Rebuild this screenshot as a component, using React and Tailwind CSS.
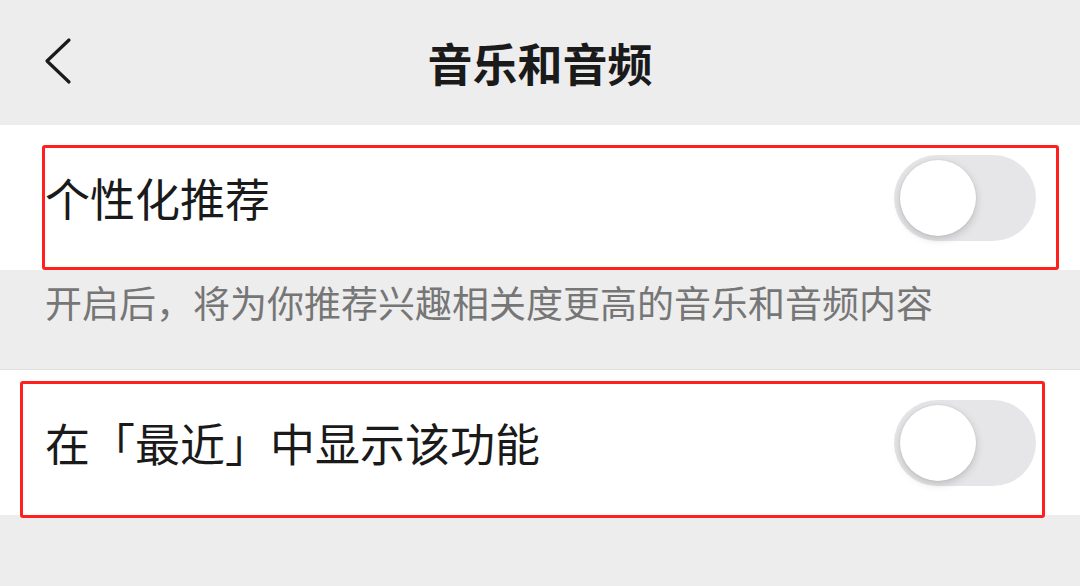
const cjk = { fontFamily: '"Noto Sans CJK SC", "Noto Sans", sans-serif' };

function Toggle() {
  return (
    <div className="relative w-[142px] h-[86px] rounded-full bg-[#e6e6e9]">
      <div className="absolute left-[6px] top-[5px] w-[76px] h-[76px] rounded-full bg-white shadow-[0_3px_8px_rgba(0,0,0,0.18),0_0_0_1px_rgba(0,0,0,0.03)]" />
    </div>
  );
}

function SettingRow({ label, mark }) {
  return (
    <div className="relative bg-white h-[145px] flex items-center justify-between pl-[45px] pr-[44px]">
      <span className="text-[45px] text-[#1a1a1a] leading-none">{label}</span>
      <Toggle />
      <div className={`absolute border-[3px] border-[#ff1f1f] rounded-[3px] ${mark}`} />
    </div>
  );
}

export default function App() {
  return (
    <div className="w-[1080px] h-[586px] bg-[#ededed] overflow-hidden" style={cjk}>
      <div className="relative h-[125px] flex items-center justify-center">
        <svg className="absolute left-[42px] top-[37px]" width="32" height="48" viewBox="0 0 32 48" fill="none">
          <path d="M27 3 L5 24 L27 45" stroke="#1a1a1a" strokeWidth="3.2" strokeLinecap="round" strokeLinejoin="round" />
        </svg>
        <h1 className="text-[45px] font-bold text-[#1a1a1a] leading-none">音乐和音频</h1>
      </div>

      <SettingRow label="个性化推荐" mark="left-[42px] top-[20px] w-[1017px] h-[125px]" />

      <div className="h-[100px] pl-[45px] pt-[10px] border-b border-[#e0e0e0]">
        <p className="text-[37px] text-[#767676] leading-[44px]">开启后，将为你推荐兴趣相关度更高的音乐和音频内容</p>
      </div>

      <SettingRow label="在「最近」中显示该功能" mark="left-[20px] top-[11px] w-[1025px] h-[137px]" />
    </div>
  );
}
